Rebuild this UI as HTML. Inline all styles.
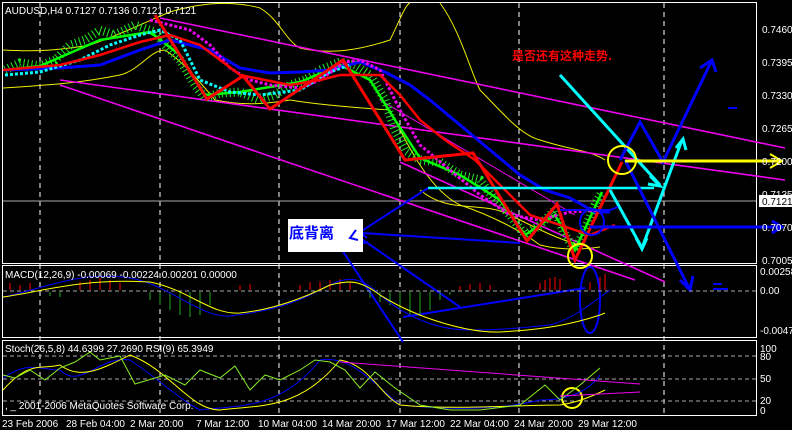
<!DOCTYPE html>
<html><head><meta charset="utf-8"><style>
html,body{margin:0;padding:0;background:#000;width:792px;height:430px;overflow:hidden}
svg{display:block}
text{font-family:"Liberation Sans",sans-serif;font-size:10px;fill:#fff}
</style></head><body>
<svg width="792" height="430" viewBox="0 0 792 430" xmlns="http://www.w3.org/2000/svg">
<rect width="792" height="430" fill="#000"/>
<g fill="none" stroke="#fff" stroke-width="1">
<rect x="2.5" y="2.5" width="754" height="261"/>
<rect x="2.5" y="265.5" width="754" height="72"/>
<rect x="2.5" y="340.5" width="754" height="75"/>
</g>
<g stroke="#fff" stroke-dasharray="5,4" stroke-width="1">
<line x1="40" y1="3" x2="40" y2="415"/><line x1="160" y1="3" x2="160" y2="415"/>
<line x1="279" y1="3" x2="279" y2="415"/><line x1="400" y1="3" x2="400" y2="415"/>
<line x1="519" y1="3" x2="519" y2="415"/><line x1="664" y1="3" x2="664" y2="415"/>
</g>
<line x1="3" y1="201" x2="756" y2="201" stroke="#aaa"/>
<!-- bollinger -->
<g fill="none" stroke="#ee0" stroke-width="1">
<path d="M3,50 C40,52 60,50 90,45 C120,35 150,20 170,12 C200,3 230,0 260,8 C280,20 285,40 300,48 C330,55 360,50 390,40 C400,20 405,5 410,3 M440,3 C460,30 470,70 480,90 C500,110 520,135 540,140 C570,150 590,150 605,160"/>
<path d="M3,88 C50,85 80,83 120,75 C140,70 150,50 165,50 C180,60 190,70 215,100 C240,105 260,105 290,100 C320,105 360,108 390,110 C410,150 430,190 460,205 C490,215 520,230 540,245 C560,250 580,250 600,247"/>
<path d="M420,190 C450,215 480,200 510,215 C540,230 560,240 580,245"/>
</g>
<!-- magenta trend lines -->
<g stroke="#e0e" stroke-width="1.6" fill="none">
<line x1="160" y1="18" x2="785" y2="148"/>
<line x1="60" y1="80" x2="785" y2="180"/>
<line x1="60" y1="85" x2="635" y2="280"/>
<line x1="400" y1="162" x2="665" y2="282"/>
<line x1="380" y1="100" x2="575" y2="215" stroke-width="1"/>
</g>
<!-- candles -->
<path d="M5,70 L20,63 L40,66 L55,60 L70,45 L85,40 L100,30 L115,35 L135,25 L155,32 L165,45 L180,60 L195,85 L205,98 L220,93 L240,92 L260,100 L275,95 L290,85 L305,80 L320,70 L340,62 L355,65 L370,75 L385,100 L395,130 L405,150 L420,160 L440,162 L460,175 L480,180 L495,200 L510,215 L525,235 L540,225 L555,210 L565,235 L575,250 L585,230 L595,205 L602,192" fill="none" stroke="#2e2" stroke-width="9" stroke-dasharray="1,3"/>
<path d="M5,70 L40,66 L100,40 L150,32 L180,55 L205,95 L240,92 L300,82 L340,65 L370,80 L395,120 L420,158 L460,175 L500,200 L525,235 L555,215 L575,250 L602,192" fill="none" stroke="#0f0" stroke-width="2.5"/>
<!-- blue MA -->
<path d="M3,70 L60,68 L100,65 L140,50 L170,40 L210,50 L240,68 L270,73 L300,72 L330,70 L360,62 L385,72 L410,85 L430,100 L460,125 L490,150 L520,175 L545,190 L570,198 L595,212 L610,212" fill="none" stroke="#00f" stroke-width="3"/>
<path d="M5,75 L40,72 L80,60 L110,45 L140,35 L160,30 L180,40 L200,80 L230,92 L260,95 L300,90 L330,72 L350,65" fill="none" stroke="#0ff" stroke-width="3" stroke-dasharray="3,2"/>
<path d="M150,20 L170,25 L190,30 L210,45 L230,68 L250,80 L270,85 L300,88 L320,80 L345,62 L360,60 L380,70 L400,110 L420,145 L450,170 L480,195 L510,215 L540,220 L570,212 L600,210" fill="none" stroke="#e0e" stroke-width="3" stroke-dasharray="3,2"/>
<!-- red MA & zigzag -->
<path d="M3,70 L60,65 L100,55 L140,42 L170,35 L200,45 L220,60 L240,75 L265,80 L290,85 L320,80 L340,75 L380,75 L400,95 L420,120 L445,140 L475,160 L500,185 L530,215 L560,225 L590,235 L615,225" fill="none" stroke="#f00" stroke-width="2.5"/>
<path d="M155,15 L207,99 L243,76 L270,109 L343,60 L405,160 L473,153 L527,241 L557,204 L575,260 L622,162" fill="none" stroke="#f00" stroke-width="3"/>
<!-- cyan -->
<line x1="428" y1="188" x2="654" y2="188" stroke="#0ff" stroke-width="2.5"/>
<path d="M560,75 L660,185 M650,176 L660,186 L648,184 M610,190 L642,248 L682,140 M636,238 L642,249 L647,238 M676,148 L683,139 L686,150" fill="none" stroke="#0ff" stroke-width="3"/>
<!-- blue arrows -->
<g fill="none" stroke="#00f" stroke-width="3">
<path d="M620,160 L640,122 L663,162 L712,60 M700,68 L712,60 L716,72"/>
<path d="M625,160 L690,290 M680,280 L690,290 L693,276"/>
<path d="M590,227 L782,227 M772,221 L782,227 L772,233"/>
<path d="M728,108 L737,108" stroke-width="2"/>
<path d="M713,284 L722,284 M713,289 L728,289" stroke-width="2"/>
</g>
<g fill="none" stroke="#00f" stroke-width="2">
<path d="M357,234 L428,188"/>
<path d="M362,233 L520,243"/>
<path d="M363,240 L460,307"/>
<path d="M403,317 L585,288"/>
<path d="M340,247 L403,342"/>
<path d="M352,240 L361,233 L367,238 M360,244 L368,242 M340,248 L347,247 M344,252 L347,246 L356,246"/>
<path d="M560,210 L610,210 L618,207"/>
</g>
<ellipse cx="590" cy="300" rx="10" ry="33" fill="none" stroke="#00f" stroke-width="2"/>
<ellipse cx="592" cy="222" rx="12" ry="13" fill="none" stroke="#00f" stroke-width="2"/>
<!-- yellow -->
<line x1="625" y1="161" x2="780" y2="161" stroke="#ff0" stroke-width="3"/>
<path d="M770,154 L782,161 L770,168" fill="none" stroke="#ff0" stroke-width="2"/>
<circle cx="622" cy="160" r="14" fill="none" stroke="#ff0" stroke-width="2"/>
<circle cx="580" cy="256" r="12" fill="none" stroke="#ff0" stroke-width="2"/>
<circle cx="572" cy="398" r="10" fill="none" stroke="#ff0" stroke-width="2"/>
<!-- label box -->
<rect x="288" y="219" width="75" height="33" fill="#fff"/>
<text x="289" y="238" style="font-family:'Noto Sans CJK SC',sans-serif;font-size:15px;fill:#00f;font-weight:bold">底背离</text>
<path d="M356,230 L350,238 L358,240" fill="none" stroke="#00f" stroke-width="2"/>
<text x="512" y="60" style="font-family:'Noto Sans CJK SC',sans-serif;font-size:12px;fill:#f00;font-weight:bold">是否还有这种走势.</text>
<text x="5" y="14">AUDUSD,H4  0.7127 0.7136 0.7121 0.7121</text>
<!-- MACD -->
<line x1="3" y1="291" x2="756" y2="291" stroke="#aaa" stroke-dasharray="4,3"/>
<path d="M10,290 V283 M20,290 V285 M30,290 V283 M80,290 V282 M90,290 V280 M100,290 V278 M110,290 V280 M120,290 V283 M240,290 V285 M250,290 V284 M300,290 V285 M310,290 V282 M320,290 V282 M330,290 V280 M340,290 V279 M350,290 V283 M460,290 V286 M470,290 V284 M480,290 V283 M490,290 V285 M540,290 V283 M545,290 V280 M550,290 V278 M555,290 V277 M560,290 V279 M590,290 V282 M600,290 V277 M605,290 V274" stroke="#f00"/>
<path d="M50,292 V296 M60,292 V297 M150,292 V300 M160,292 V305 M170,292 V310 M180,292 V315 M190,292 V317 M200,292 V315 M210,292 V305 M370,292 V298 M380,292 V302 M390,292 V305 M400,292 V310 M410,292 V315 M420,292 V316 M430,292 V310 M440,292 V300 M450,292 V295" stroke="#2a2"/>
<path d="M3,297 C40,290 80,270 130,278 C170,285 200,318 230,316 C280,310 300,300 320,290 C345,275 360,275 380,295 C410,320 440,330 470,330 C500,330 520,328 550,325 C570,320 590,305 610,290" fill="none" stroke="#00f"/>
<path d="M3,297 C40,292 80,278 150,282 C190,290 210,315 240,313 C270,310 300,300 330,285 C350,280 360,280 380,295 C420,320 470,333 500,332 C540,330 570,325 600,315 L605,313" fill="none" stroke="#ff0"/>
<text x="5" y="278">MACD(12,26,9) -0.00069 -0.00224 0.00201 0.00000</text>
<!-- Stoch -->
<g stroke="#aaa" stroke-dasharray="4,3"><line x1="3" y1="356" x2="756" y2="356"/><line x1="3" y1="379" x2="756" y2="379"/><line x1="3" y1="401" x2="756" y2="401"/></g>
<path d="M3,378 C30,360 40,370 60,370 C80,390 100,355 130,360 C160,380 180,400 200,410 C240,405 280,410 320,360 C350,355 370,380 400,405 C450,410 500,410 540,400 C570,400 590,390 600,375" fill="none" stroke="#00f"/>
<path d="M3,390 C30,360 40,370 60,365 C80,380 100,370 130,355 C170,370 190,410 220,410 C260,405 300,410 340,360 C370,365 380,395 400,405 C450,410 520,405 560,405 C580,402 595,395 605,390" fill="none" stroke="#ff0"/>
<path d="M3,375 L15,378 L30,370 L45,380 L60,368 L75,362 L90,352 L100,360 L120,356 L135,384 L155,378 L165,375 L185,385 L200,370 L220,378 L235,366 L250,390 L265,375 L280,380 L300,370 L315,360 L330,362 L345,370 L360,388 L375,372 L395,388 L420,405 L450,410 L480,410 L520,405 L545,385 L560,400 L580,385 L600,368" fill="none" stroke="#8e2"/>
<path d="M340,362 L640,384 M560,396 L640,392" fill="none" stroke="#e0e"/>
<text x="5" y="352">Stoch(26,5,8) 44.6399 27.2690  RSI(9) 65.3949</text>
<text x="5" y="409">, _ 2001-2006 MetaQuotes Software Corp.</text>
<g>
<text x="762" y="33">0.7460</text><text x="762" y="66">0.7395</text><text x="762" y="99">0.7330</text>
<text x="762" y="132">0.7265</text><text x="762" y="165">0.7200</text><text x="762" y="198">0.7135</text>
<rect x="759" y="195" width="33" height="12" fill="#fff"/><text x="762" y="205" style="fill:#000">0.7121</text>
<text x="762" y="231">0.7070</text><text x="762" y="264">0.7005</text>
<text x="760" y="275">0.00258</text><text x="760" y="294">0.00</text><text x="760" y="334">-0.00471</text>
<text x="760" y="352">100</text><text x="760" y="360">80</text><text x="760" y="382">50</text><text x="760" y="404">20</text><text x="760" y="414">0</text>
</g>
<g>
<text x="2" y="427">23 Feb 2006</text><text x="66" y="427">28 Feb 04:00</text><text x="130" y="427">2 Mar 20:00</text>
<text x="196" y="427">7 Mar 12:00</text><text x="258" y="427">10 Mar 04:00</text><text x="322" y="427">14 Mar 20:00</text>
<text x="386" y="427">17 Mar 12:00</text><text x="450" y="427">22 Mar 04:00</text><text x="514" y="427">24 Mar 20:00</text>
<text x="578" y="427">29 Mar 12:00</text>
</g>
</svg>
</body></html>
